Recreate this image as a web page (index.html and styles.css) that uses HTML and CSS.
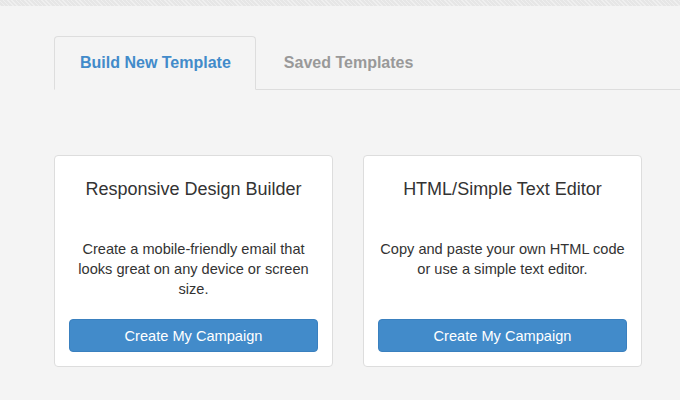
FILE: index.html
```html
<!DOCTYPE html>
<html lang="en">
<head>
    <meta charset="UTF-8">
    <meta name="viewport" content="width=device-width, initial-scale=1.0">
    <title>Templates</title>
    <link rel="stylesheet" href="styles.css">
</head>
<body>

    <div class="top-strip"></div>

    <div class="page">
        <ul class="tabs">
            <li class="tab active">Build New Template</li>
            <li class="tab">Saved Templates</li>
        </ul>

        <div class="cards">
            <div class="card">
                <h3>Responsive Design Builder</h3>
                <p>Create a mobile-friendly email that looks great on any device or screen size.</p>
                <button class="btn-primary">Create My Campaign</button>
            </div>
            <div class="card">
                <h3>HTML/Simple Text Editor</h3>
                <p>Copy and paste your own HTML code or use a simple text editor.</p>
                <button class="btn-primary">Create My Campaign</button>
            </div>
        </div>
    </div>

</body>
</html>
```

FILE: styles.css
```css
body {
    margin: 0;
    font-family: "Liberation Sans", Arial, sans-serif;
    font-size: 14.6px;
    color: #333;
    background-color: #f4f4f4;
}
.top-strip {
    height: 6px;
    background-color: #e6e6e6;
    background-image: repeating-linear-gradient(45deg, #efefef 0 1px, transparent 1px 3px);
}
.page {
    padding-left: 54px;
}
.tabs {
    display: flex;
    list-style: none;
    margin: 30px 0 0 0;
    padding: 0;
    border-bottom: 1px solid #ddd;
}
.tab {
    height: 52px;
    line-height: 52px;
    padding: 0 25px;
    margin-right: 2px;
    margin-bottom: -1px;
    font-size: 16px;
    font-weight: bold;
    color: #999;
    border: 1px solid transparent;
    border-radius: 4px 4px 0 0;
}
.tab.active {
    padding: 0 24px 0 25px;
    color: #428bca;
    border-color: #ddd;
    border-bottom-color: #f4f4f4;
    background-color: #f4f4f4;
}
.cards {
    display: flex;
    gap: 30px;
    margin-top: 65px;
}
.card {
    width: 249px;
    display: flex;
    flex-direction: column;
    padding: 14px;
    background-color: #fff;
    border: 1px solid #ddd;
    border-radius: 4px;
    text-align: center;
}
.card h3 {
    margin: 9px 0 0 0;
    font-size: 18px;
    line-height: 20px;
    font-weight: normal;
}
.card p {
    margin: 40px 0 20px 0;
    line-height: 20px;
}
.btn-primary {
    margin-top: auto;
    height: 33px;
    font-family: inherit;
    font-size: 14.6px;
    color: #fff;
    background-color: #428bca;
    border: 1px solid #3a80bf;
    border-radius: 4px;
    cursor: pointer;
}
```
